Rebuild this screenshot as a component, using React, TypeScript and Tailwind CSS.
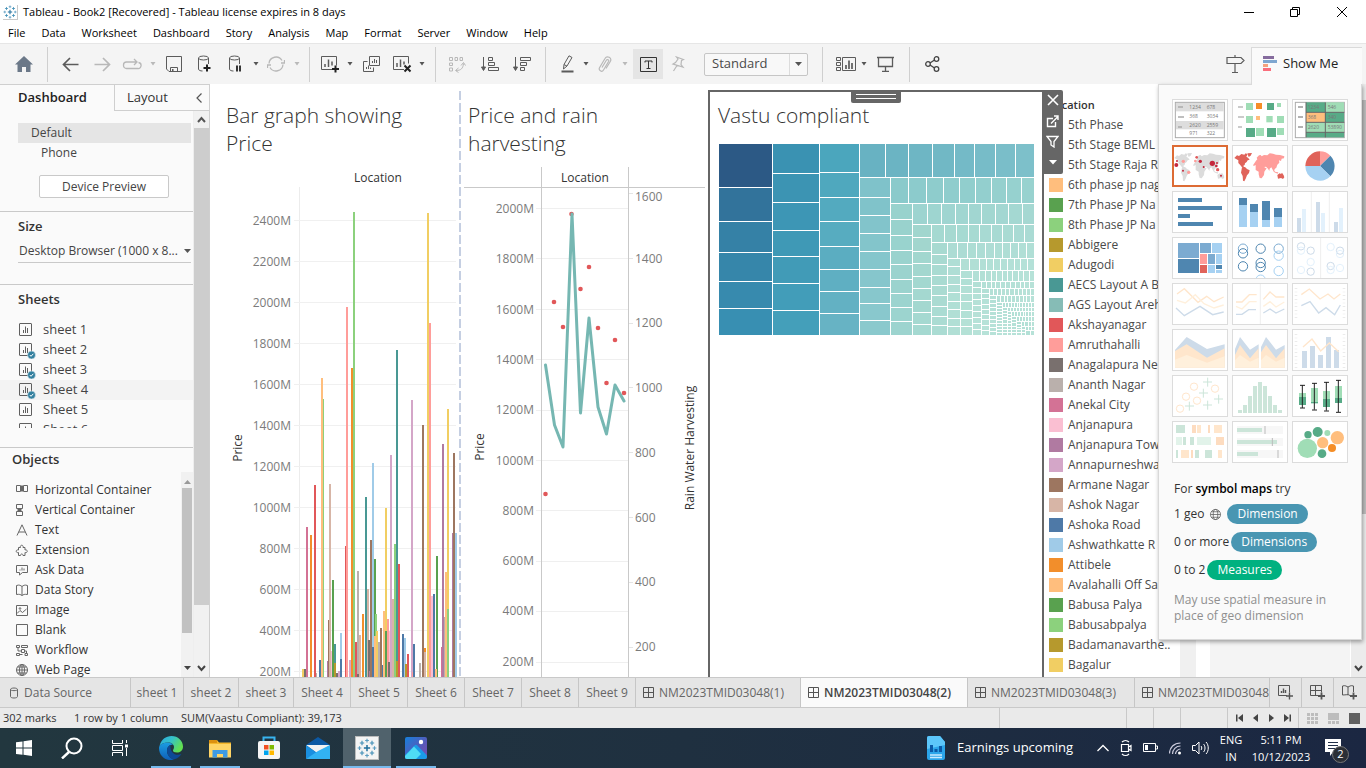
import React from "react";

const UI = "font-['Open_Sans','Noto_Sans',sans-serif]";

/* ---------- shared bits ---------- */

function Svg({ w, h, vb, children, label }: { w: number; h: number; vb?: string; children: React.ReactNode; label?: string }) {
  return (
    <svg width={w} height={h} viewBox={vb ?? `0 0 ${w} ${h}`} fill="none" className="block shrink-0" role={label ? "img" : undefined} aria-label={label} aria-hidden={label ? undefined : true}>
      {children}
    </svg>
  );
}

function Caret({ dim }: { dim?: boolean }) {
  return (
    <Svg w={6} h={4}>
      <path d="M0.5 0h5L3 3.5z" fill={dim ? "#b9b9b9" : "#555"} />
    </Svg>
  );
}

function TableauMark({ s }: { s: number }) {
  const plus = (x: number, y: number, r: number) => `M${x - r} ${y}h${2 * r}M${x} ${y - r}v${2 * r}`;
  return (
    <Svg w={s} h={s} vb="0 0 32 32">
      <path d={plus(16, 16, 5)} stroke="#1f6f9c" strokeWidth="2.4" />
      <path d={[plus(8, 8, 3.5), plus(24, 8, 3.5), plus(8, 24, 3.5), plus(24, 24, 3.5)].join("")} stroke="#3f8db5" strokeWidth="1.8" />
      <path d={[plus(16, 4, 3), plus(16, 28, 3), plus(4, 16, 3), plus(28, 16, 3)].join("")} stroke="#5a9cc0" strokeWidth="1.8" />
    </Svg>
  );
}

/* ---------- title and menu ---------- */

function TitleBar() {
  return (
    <header className="flex h-6 shrink-0 items-center bg-white pl-[3px] text-xs text-black">
      <span className="mr-[5px] border-r border-b border-[#c9c9c9]"><TableauMark s={14} /></span>
      <h1 className="flex-1 text-[11px]">Tableau - Book2 [Recovered] - Tableau license expires in 8 days</h1>
      <div className="flex">
        <button aria-label="Minimize" className="flex w-[46px] items-center justify-center"><Svg w={10} h={10}><path d="M0 5.5h10" stroke="#000" /></Svg></button>
        <button aria-label="Restore" className="flex w-[46px] items-center justify-center">
          <Svg w={10} h={10}><path d="M0.5 2.5h7v7h-7zM2.5 2.5v-2h7v7h-2" stroke="#000" /></Svg>
        </button>
        <button aria-label="Close" className="flex w-[48px] items-center justify-center"><Svg w={10} h={10}><path d="M0 0l10 10M10 0L0 10" stroke="#000" /></Svg></button>
      </div>
    </header>
  );
}

function MenuBar() {
  const items = ["File", "Data", "Worksheet", "Dashboard", "Story", "Analysis", "Map", "Format", "Server", "Window", "Help"];
  return (
    <nav className="flex h-[19px] shrink-0 items-center gap-4 bg-white pl-2 text-[11px] text-black">
      {items.map((m) => <button key={m}>{m}</button>)}
    </nav>
  );
}

/* ---------- toolbar ---------- */

const G = "#5b5b5b";
const D = "#b8b8b8";

function Sep({ className }: { className: string }) {
  return <span className={`h-[35px] w-px bg-[#cfcfcf] ${className}`} />;
}

function Tool({ className, label, children }: { className: string; label: string; children: React.ReactNode }) {
  return <button aria-label={label} className={`flex h-[30px] shrink-0 items-center justify-center ${className}`}>{children}</button>;
}

function Cylinder({ children }: { children: React.ReactNode }) {
  return (
    <Svg w={18} h={20}>
      <ellipse cx="7.5" cy="4" rx="5" ry="2" stroke={G} />
      <path d="M2.5 4v11c0 1.4 2 2 4 2M12.500 4v6" stroke={G} />
      {children}
    </Svg>
  );
}

function Toolbar() {
  return (
    <div className="flex h-[41px] shrink-0 items-center border-t border-[#e6e6e6] bg-[#f4f4f4]">
      <Tool className="w-[47px]" label="Start page">
        <Svg w={18} h={16}><path d="M9 0L0 8.500h2.500V16h4.500v-5h4v5h4.500V8.500H18z" fill="#6b7888" /></Svg>
      </Tool>
      <Sep className="" />
      <Tool className="ml-[6px] w-8" label="Undo"><Svg w={17} h={15}><path d="M16.500 7.500H1.500M8 1L1.500 7.500L8 14" stroke={G} strokeWidth="1.700" /></Svg></Tool>
      <Tool className="w-8" label="Redo"><Svg w={17} h={15}><path d="M0.500 7.500h15M9 1l6.500 6.500L9 14" stroke={D} strokeWidth="1.700" /></Svg></Tool>
      <Tool className="w-7" label="Replay"><Svg w={20} h={13}><path d="M8 10.500H4.500a3 3 0 0 1-3-3v-0.500a3 3 0 0 1 3-3H14M12 1l3 3L12 7M16.500 4.500a3 3 0 0 1-1 6H7" stroke={D} strokeWidth="1.300" /></Svg></Tool>
      <Tool className="w-[14px]" label="Replay options"><Caret dim /></Tool>
      <Tool className="w-7" label="Save"><Svg w={16} h={16}><path d="M0.500 0.500h15v15H3L0.500 13zM4.500 15.500v-4h7v4" stroke={G} /><path d="M6 13h1.500v2H6z" fill={G} /></Svg></Tool>
      <Tool className="w-[34px]" label="New data source"><Cylinder><path d="M11 10.500v7M7.500 14h7" stroke="#222" strokeWidth="2" /></Cylinder></Tool>
      <Tool className="w-7" label="Pause updates"><Cylinder><path d="M10 11.500v6M13 11.500v6" stroke="#222" strokeWidth="1.800" /></Cylinder></Tool>
      <Tool className="w-3" label="Pause options"><Caret /></Tool>
      <Tool className="w-7" label="Refresh"><Svg w={18} h={16}><path d="M2 7.500a7 7 0 0 1 13-3M16 8.500a7 7 0 0 1-13 3M14 7h3.500V4M4 9H0.500v3" stroke={D} strokeWidth="1.300" /></Svg></Tool>
      <Tool className="w-[14px]" label="Refresh options"><Caret dim /></Tool>
      <Sep className="ml-[5px]" />
      <Tool className="ml-[5px] w-[30px]" label="New worksheet"><Svg w={19} h={18}><path d="M12 14.500H0.500V1.500h15v9" stroke={G} /><path d="M4 9v3M7.500 4.500V12M11 6.500v4" stroke={G} strokeWidth="1.500" /><path d="M14.500 10.500v7M11 14h7" stroke="#222" strokeWidth="2" /></Svg></Tool>
      <Tool className="w-[10px]" label="New options"><Caret /></Tool>
      <Tool className="w-[33px]" label="Duplicate"><Svg w={18} h={17}><path d="M6.500 0.500h10v9h-10zM4.500 5.500h-4v10h10v-4" stroke={G} /><path d="M9.500 7V5M11.500 7V3M13.500 7V4M3.500 13v-2M5.500 13V9.500M7.500 13v-1.500" stroke={G} /></Svg></Tool>
      <Tool className="w-7" label="Clear sheet"><Svg w={19} h={18}><path d="M11 14.500H0.500V1.500h15v7" stroke={G} /><path d="M4 8v4M7.500 4.500V12M11 6.500v3" stroke={G} strokeWidth="1.500" /><path d="M11.500 10.500l6 6M17.500 10.500l-6 6" stroke="#222" strokeWidth="2" /></Svg></Tool>
      <Tool className="w-3" label="Clear options"><Caret /></Tool>
      <Sep className="ml-[7px]" />
      <Tool className="ml-[5px] w-8" label="Swap rows and columns"><Svg w={18} h={17}><path d="M1.500 1.500h3v3h-3zM7 1.500h2.500v3H7zM12 1.500h2.500v3H12zM1.500 7h3v2.500h-3zM1.500 12h3v3h-3zM8 14.500c5 0 7-2 7.500-7M13 9.500l2.500-3 2 3M10.500 12l-3 2.500 3 2" stroke={D} /></Svg></Tool>
      <Tool className="w-[34px]" label="Sort ascending"><Svg w={18} h={16}><path d="M2.500 1v13M0.500 11l2 3.500 2-3.500z" stroke={G} fill={G} /><path d="M7.500 1.500h4v3h-4zM7.500 6.500h6v3h-6zM7.500 11.500h10v3h-10z" stroke={G} /></Svg></Tool>
      <Tool className="w-[30px]" label="Sort descending"><Svg w={18} h={16}><path d="M2.500 1v13M0.500 11l2 3.500 2-3.500z" stroke={G} fill={G} /><path d="M7.500 1.500h10v3h-10zM7.500 6.500h6v3h-6zM7.500 11.500h4v3h-4z" stroke={G} /></Svg></Tool>
      <Sep className="ml-2" />
      <Tool className="ml-[7px] w-[30px]" label="Highlight"><Svg w={14} h={18}><path d="M3 9.500L8 0.800l3 1.700-5 8.500-3.500 3zM3 9.500l3 1.700" stroke={G} /><path d="M0.500 16.500h12" stroke={G} strokeWidth="2" /></Svg></Tool>
      <Tool className="w-[6px]" label="Highlight options"><Caret /></Tool>
      <Tool className="w-8" label="Group"><Svg w={14} h={17}><path d="M4 11.500L8.500 4a1.300 1.300 0 0 1 2.200 1.300L5.500 14a2.300 2.300 0 0 1-4-2.300L7 2.500a3 3 0 0 1 5.300 3L8 12.500" stroke={D} strokeWidth="1.200" /></Svg></Tool>
      <Tool className="w-2" label="Group options"><Caret dim /></Tool>
      <Tool className="ml-1 w-[30px] bg-[#e5e5e5]" label="Show mark labels"><Svg w={17} h={15}><path d="M0.500 0.500h16v14h-16z" stroke="#333" /><path d="M5 5.500V4h7v1.500M8.500 4v7.500M6.500 11.500h4" stroke="#333" /></Svg></Tool>
      <Tool className="w-[30px]" label="Fix axes"><Svg w={14} h={16}><path d="M5.500 1l7 2.500-2 1-0.500 4 2 2.500L2 8l2.500-1.500L7 3zM6 9.500L2.500 15" stroke={D} strokeWidth="1.200" /></Svg></Tool>
      <div className="relative ml-[11px] flex h-[23px] w-[104px] shrink-0 items-center rounded-[2px] border border-[#c6c6c6] bg-[#f8f8f8]">
        <select aria-label="Fit" className="h-full w-full appearance-none bg-transparent pl-[7px] text-[13px] text-[#4a4a4a]" defaultValue="Standard"><option>Standard</option></select>
        <span className="pointer-events-none absolute right-0 flex h-full w-[18px] items-center justify-center border-l border-[#dcdcdc]"><Svg w={7} h={4}><path d="M0 0h7L3.500 4z" fill="#555" /></Svg></span>
      </div>
      <Sep className="ml-[14px]" />
      <Tool className="ml-2 w-[30px]" label="Show cards"><Svg w={20} h={15}><path d="M0.500 0.500h4v3h-4zM0.500 5.500h4v3h-4zM0.500 10.500h4v3h-4zM6.500 0.500h13v13h-13z" stroke={G} /><path d="M10 12V8M13 12V3.500M16 12V6" stroke={G} strokeWidth="1.700" /></Svg></Tool>
      <Tool className="w-[6px]" label="Card options"><Caret /></Tool>
      <Tool className="ml-[3px] w-[30px]" label="Presentation mode"><Svg w={17} h={16}><path d="M0 1.500h17M1.500 1.500v9h14v-9M8.500 10.500V15M5 15.500h7" stroke={G} strokeWidth="1.300" /></Svg></Tool>
      <Sep className="ml-[9px]" />
      <Tool className="ml-[7px] w-[30px]" label="Share"><Svg w={15} h={16}><g stroke="#444" strokeWidth="1.300"><circle cx="3" cy="8" r="2.300" /><circle cx="11.500" cy="3" r="2.300" /><circle cx="11.500" cy="13" r="2.300" /><path d="M5 7l4.500-3M5 9l4.500 3" /></g></Svg></Tool>
      <span className="flex-1" />
      <Tool className="w-8" label="Guide"><Svg w={19} h={18}><path d="M1 2.500h14l3 3-3 3H1zM9 0v2.500M9 8.500V17M6 17.500h6" stroke={G} strokeWidth="1.200" /></Svg></Tool>
      <button className="relative z-20 mr-1 flex h-[37px] w-[111px] shrink-0 items-center self-end border-t border-l border-[#dadada] bg-[#fafafa] pb-[5px] pl-[11px] text-[13px] text-[#222]">
        <Svg w={15} h={15}><path d="M0 0h11v3H0z" fill="#866c9e" /><path d="M0 4h14v3H0z" fill="#7fa7d0" /><path d="M0 8h5v3H0z" fill="#f5a27d" /><path d="M0 12h8v3H0z" fill="#fa6e7c" /></Svg>
        <span className="ml-[5px]">Show Me</span>
      </button>
    </div>
  );
}

/* ---------- side pane ---------- */

function SheetIcon({ used }: { used: boolean }) {
  return (
    <Svg w={17} h={17}>
      <rect x="0.500" y="1.500" width="12" height="12" rx="0.500" stroke="#5f5f5f" />
      <path d="M4.500 8v3M6.500 4.500V11M8.500 6v5" stroke="#5f5f5f" />
      {used && <><circle cx="12.500" cy="13" r="4" fill="#33809f" stroke="#fafafa" strokeWidth="0.500" /><path d="M10.800 13l1.200 1.300 2.300-2.500" stroke="#fff" /></>}
    </Svg>
  );
}

const objectIcons: [string, React.ReactNode][] = [
  ["Horizontal Container", <path key="a" d="M0.500 1.500h4v6h-4zM7.500 1.500h4v6h-4zM5.500 1.500v6M6.500 1.500v6" />],
  ["Vertical Container", <path key="b" d="M0.500 0.500h6v4h-6zM0.500 7.500h6v4h-6zM1.500 5.500h4M1.500 6.500h4" />],
  ["Text", <path key="c" d="M1 11.500L6 0.800l5 10.700M2.800 8h6.400" />],
  ["Extension", <path key="d" d="M2.500 11.500V8.500c-3 1-3-3.500 0-2.500V3.500h2c-1-3 3.500-3 2.500 0h2V6c3-1 3 3.500 0 2.500v3h-2c0-2-2.500-2-2.500 0z" />],
  ["Ask Data", <path key="e" d="M0.500 1.500h11v7h-5L3.500 11V8.500h-3zM4 6.500v-1M6 6.500v-3M8 6.500v-2" />],
  ["Data Story", <path key="f" d="M0.500 1.500c3-1 4 0 5.500 1 1.500-1 2.500-2 5.500-1v9c-3-0.500-4 0-5.500 1-1.500-1-2.500-1.500-5.500-1zM6 2.500v9" />],
  ["Image", <g key="g"><path d="M0.500 1.500h11v10h-11zM1 9.500l3-3 2.500 2 4-3.500" /><circle cx="4" cy="4.500" r="0.800" /></g>],
  ["Blank", <path key="h" d="M0.500 0.500h11v11h-11z" />],
  ["Workflow", <path key="i" d="M0.500 1.500h3v2h-3zM5.500 1.500h6v2h-6zM2 4v3h3M5.500 5.500h3v3h-3zM0.500 9.500h3v2h-3zM8.500 7h2v2.500M9 9.500h2.500v2H9zM3.500 10.500h3" />],
  ["Web Page", <g key="j"><circle cx="6" cy="6" r="5.500" /><ellipse cx="6" cy="6" rx="2.500" ry="5.500" /><path d="M0.500 6h11M1.500 3h9M1.500 9h9M6 0.500v11" /></g>],
];

function SidePane() {
  return (
    <aside className="flex w-[210px] shrink-0 flex-col overflow-hidden border-t border-r border-[#cfcfcf] bg-[#fafafa] text-[12px] text-[#444]">
      <div className="flex h-[26px] shrink-0 text-[13px]">
        <button className="w-[114px] pl-[18px] text-left font-semibold text-[#222]">Dashboard</button>
        <div className="flex flex-1 items-center border-b border-l border-[#cfcfcf] pr-[7px] pl-3">
          <button className="flex-1 text-left text-[#333]">Layout</button>
          <button aria-label="Collapse pane"><Svg w={6} h={10}><path d="M5.500 0.500L1 5l4.500 4.500" stroke="#555" strokeWidth="1.200" /></Svg></button>
        </div>
      </div>
      <div className="flex min-h-0 flex-1">
        <div className="flex min-w-0 flex-1 flex-col">
          <section className="h-[101px] shrink-0 border-b border-[#c9c9c9] pt-3 pr-[2px] pl-[18px]">
            <button className="block h-5 w-full bg-[#e5e5e5] pl-[13px] text-left">Default</button>
            <button className="block h-5 w-full pl-[23px] text-left">Phone</button>
            <button className="mt-3 ml-[21px] flex h-[23px] w-[130px] items-center justify-center rounded-[2px] border border-[#c9c9c9] bg-white text-[12px]">Device Preview</button>
          </section>
          <section className="h-[73px] shrink-0 border-b border-[#c9c9c9] pt-[6px] pr-[2px] pl-[18px]">
            <h2 className="text-[13px] leading-4 font-semibold text-[#333]">Size</h2>
            <button className="mt-[6px] flex h-[23px] w-full items-center justify-between border-b border-[#c9c9c9] pl-px text-[12px] whitespace-nowrap">
              <span>Desktop Browser (1000 x 8...</span>
              <Svg w={7} h={4}><path d="M0 0h7L3.500 4z" fill="#555" /></Svg>
            </button>
          </section>
          <section className="h-[163px] shrink-0 overflow-hidden border-b border-[#c9c9c9] pt-[6px] pb-[19px]">
            <h2 className="pl-[18px] text-[13px] leading-4 font-semibold text-[#333]">Sheets</h2>
            <ul className="mt-[13px] h-[108px] overflow-hidden">
              {["sheet 1", "sheet 2", "sheet 3", "Sheet 4", "Sheet 5", "Sheet 6"].map((s, i) => (
                <li key={s} className={i === 3 ? "flex h-5 items-center gap-[7px] bg-[#f3f3f3] pl-[19px]" : "flex h-5 items-center gap-[7px] pl-[19px]"}>
                  <SheetIcon used={i > 0 && i < 4} /><span className="text-[13px]">{s}</span>
                </li>
              ))}
            </ul>
          </section>
          <section className="flex min-h-0 flex-1 flex-col pt-[3px]">
            <h2 className="pl-3 text-[13px] leading-4 font-semibold text-[#333]">Objects</h2>
            <div className="mt-[5px] flex min-h-0 flex-1">
              <ul className="flex-1 overflow-hidden pt-2">
                {objectIcons.map(([name, icon]) => (
                  <li key={name} className="flex h-5 items-center pl-4">
                    <svg width="12" height="12" viewBox="0 0 12 12" fill="none" stroke="#666" className="mr-[7px] shrink-0 overflow-visible" aria-hidden>{icon}</svg>
                    <span className="whitespace-nowrap text-[#333]">{name}</span>
                  </li>
                ))}
              </ul>
              <div className="flex w-3 flex-col items-center bg-[#f1f1f1] py-1">
                <Svg w={7} h={12}><path d="M0 8h7L3.500 4z" fill="#999" /></Svg>
                <span className="min-h-0 w-[10px] flex-1 bg-[#c1c1c1]" />
                <span className="h-8" />
                <Svg w={7} h={8}><path d="M0 1h7L3.500 5z" fill="#444" /></Svg>
              </div>
            </div>
          </section>
        </div>
        <div className="flex w-4 flex-col items-center border-l border-[#eee] bg-[#f1f1f1]">
          <Svg w={15} h={17}><path d="M4 11l3.500-4 3.500 4" stroke="#555" strokeWidth="2" /></Svg>
          <span className="min-h-0 w-[15px] flex-1 bg-[#cdcdcd]" />
          <span className="h-14" />
          <Svg w={15} h={16}><path d="M4 5l3.500 4L11 5" stroke="#444" strokeWidth="2" /></Svg>
        </div>
      </div>
    </aside>
  );
}

/* ---------- charts ---------- */

const T = {
  y: "#f1ce63", k: "#79706e", p: "#d37295", o: "#f28e2b", r: "#e15759", a: "#bab0ac", b: "#4e79a7", lo: "#ffbe7d",
  lg: "#8cd17d", v: "#b07aa1", n: "#9d7660", t: "#d7b5a6", g: "#59a14f", e: "#499894", d: "#b6992d", lv: "#d4a6c8",
  lb: "#a0cbe8", lr: "#ff9d9a", lp: "#fabfd2",
};

const bars: [number, number, string][] = [
  [302, 669, T.y], [304, 669, T.k], [306, 527, T.p], [310, 535, T.o], [315, 673, T.a], [314, 485, T.r], [319, 660, T.b],
  [322, 399, T.lg], [321, 378, T.lo], [327, 661, T.v], [328, 620, T.n], [329, 484, T.t], [331, 651, T.lp], [332, 580, T.g],
  [334, 644, T.e], [334, 663, T.d], [336, 673, T.k], [338, 671, T.lv], [340, 633, T.lb], [340, 659, T.b], [345, 546, T.r],
  [346, 307, T.lr], [349, 660, T.lv], [351, 368, T.o], [353, 212, T.lg], [355, 642, T.r], [357, 571, T.a], [357, 674, T.k],
  [359, 635, T.t], [362, 614, T.o], [365, 497, T.e], [367, 589, T.t], [368, 640, T.k], [369, 671, T.v], [370, 540, T.n],
  [374, 559, T.g], [372, 463, T.lb], [372, 647, T.b], [375, 614, T.lg], [374, 636, T.lo], [376, 631, T.y], [378, 642, T.a],
  [380, 628, T.n], [382, 665, T.b], [383, 611, T.lo], [385, 508, T.y], [385, 631, T.g], [387, 619, T.lr], [389, 631, T.lp],
  [388, 662, T.k], [390, 455, T.lv], [392, 599, T.t], [394, 544, T.lg], [398, 564, T.r], [396, 350, T.e], [396, 661, T.d],
  [402, 634, T.b], [404, 638, T.lb], [405, 664, T.d], [407, 654, T.r], [411, 400, T.lv], [412, 672, T.lr], [413, 644, T.b],
  [419, 663, T.a], [422, 425, T.n], [424, 648, T.o], [424, 652, T.t], [427, 213, T.y], [429, 323, T.lr], [431, 596, T.lp],
  [433, 594, T.b], [436, 556, T.g], [435, 669, T.lo], [441, 647, T.p], [442, 444, T.v], [444, 617, T.a], [445, 572, T.lo],
  [447, 409, T.y], [447, 609, T.lg], [455, 533, T.lb], [452, 533, T.v], [453, 453, T.n],
];

const axisText = { fontSize: 12, fill: "#7b7b7b" };
const headText = { fontSize: 12, fill: "#333", fontWeight: 500 };

function BarChart() {
  return (
    <svg width="249" height="520" viewBox="210 157 249 520" className="block shrink-0" role="img" aria-label="Price by location">
      <text x="378" y="182" textAnchor="middle" {...headText}>Location</text>
      <path d="M299.500 187V677" stroke="#ececec" />
      {Array.from({ length: 12 }, (_, i) => (
        <g key={i}>
          <path d={`M294 ${220.5 + 41 * i}H456`} stroke="#f0f0f0" />
          <text x="291" y={225 + 41 * i} textAnchor="end" {...axisText}>{2400 - 200 * i}M</text>
        </g>
      ))}
      <text transform="translate(242 448) rotate(-90)" textAnchor="middle" {...headText}>Price</text>
      {bars.map(([x, y, c], i) => <rect key={i} x={x} y={y} width={2} height={677 - y} fill={c} />)}
    </svg>
  );
}

const dots = [[545.5, 494], [554, 302], [563, 327], [571.5, 214], [580.5, 289], [589, 267], [598, 328], [606.5, 383], [615, 340], [624, 393]];

function LineChart() {
  return (
    <svg width="248" height="520" viewBox="461 157 248 520" className="block shrink-0" role="img" aria-label="Price and rain water harvesting by location">
      <text x="585" y="182" textAnchor="middle" {...headText}>Location</text>
      {Array.from({ length: 10 }, (_, i) => (
        <g key={i}>
          <path d={`M536 ${Math.round(208 + 50.4 * i) + 0.5}H628`} stroke="#efefef" />
          <text x="534" y={Math.round(213 + 50.3 * i)} textAnchor="end" {...axisText}>{2000 - 200 * i}M</text>
        </g>
      ))}
      {Array.from({ length: 8 }, (_, i) => (
        <g key={i}>
          <path d={`M629 ${Math.round(193 + 64.8 * i) + 0.5}h4`} stroke="#e4e4e4" />
          <text x="635" y={i === 0 ? 201 : Math.round(198 + 64.7 * i)} {...axisText}>{1600 - 200 * i}</text>
        </g>
      ))}
      <path d="M464 187.500H705M541.500 167V677M628.500 167V677" stroke="#c9c9c9" />
      {dots.map(([x, y], i) => <circle key={i} cx={x} cy={y} r="2.300" fill="#e15759" />)}
      <path d="M545.500 365L554.500 425L563 447L572 214L580.500 413L589 318L598 407L606.500 434L615 385L624 401" fill="none" stroke="#76b7b2" strokeWidth="3" strokeLinecap="round" strokeLinejoin="round" />
      <text transform="translate(484 447) rotate(-90)" textAnchor="middle" {...headText}>Price</text>
      <text transform="translate(694 448) rotate(-90)" textAnchor="middle" {...headText}>Rain Water Harvesting</text>
    </svg>
  );
}

/* A strip is a run of neighbouring tiles: "v" stacks downwards, "h" runs to the right. */
type Strip = { dir: "v" | "h"; from: number; to: number; cuts: number[]; c0: string; c1: string };

const even = (a: number, b: number, step: number) => {
  const n = Math.max(1, Math.round((b - a) / step));
  return Array.from({ length: n + 1 }, (_, i) => a + ((b - a) * i) / n);
};

const strips: Strip[] = [
  { dir: "v", from: 0, to: 54, cuts: [0, 44], c0: "#2c5985", c1: "#2c5985" },
  { dir: "v", from: 0, to: 54, cuts: [44, 78], c0: "#32739b", c1: "#32739b" },
  { dir: "v", from: 0, to: 54, cuts: [78, 109, 138, 165, 192], c0: "#3581a6", c1: "#388fb2" },
  { dir: "v", from: 54, to: 101, cuts: [0, 30, 59, 87, 113, 140, 167, 192], c0: "#3a92b2", c1: "#449fba" },
  { dir: "v", from: 101, to: 141, cuts: [0, 29, 54, 78, 103, 126, 148, 170, 192], c0: "#4ba6bd", c1: "#67b3c4" },
  { dir: "h", from: 0, to: 34, cuts: [141, 167, 190, 214, 236, 256, 277, 297, 316], c0: "#68b2c2", c1: "#7dc0ca" },
  { dir: "v", from: 141, to: 172, cuts: [34, 54, 72, 90, 108, 126, 144, 160, 177, 192], c0: "#7fc2ca", c1: "#8ac9cd" },
  { dir: "h", from: 34, to: 60, cuts: [172, 190, 208, 225, 241, 257, 273, 288, 303, 316], c0: "#8acacb", c1: "#98d2cf" },
  { dir: "v", from: 172, to: 194, cuts: [60, 76, 92, 107, 121, 136, 150, 164, 178, 192], c0: "#98d2cd", c1: "#9dd4cf" },
  { dir: "h", from: 60, to: 81, cuts: [194, 209, 223, 237, 250, 263, 277, 290, 304, 316], c0: "#9dd4d0", c1: "#a5d8d2" },
  { dir: "v", from: 194, to: 213, cuts: [81, 94, 108, 120, 133, 145, 157, 169, 181, 192], c0: "#a1d6ce", c1: "#a5d9d1" },
  { dir: "h", from: 81, to: 99, cuts: [213, 226, 238, 250, 261, 273, 284, 295, 306, 316], c0: "#a5d9d1", c1: "#aadbd4" },
  { dir: "v", from: 213, to: 229, cuts: [99, 111, 121, 132, 142, 152, 163, 173, 182, 192], c0: "#a8dad1", c1: "#abdcd3" },
  { dir: "h", from: 99, to: 115, cuts: [229, 239, 249, 258, 267, 276, 284, 292, 300, 308, 316], c0: "#acdcd4", c1: "#b0dfd6" },
  { dir: "v", from: 229, to: 242, cuts: [115, 123, 132, 141, 149, 158, 166, 175, 183, 192], c0: "#afded5", c1: "#b1dfd5" },
  { dir: "h", from: 115, to: 127, cuts: [242, 251, 261, 268, 275, 282, 289, 296, 302, 309, 316], c0: "#b1dfd5", c1: "#b4e1d8" },
  { dir: "v", from: 242, to: 254, cuts: [127, 135, 142, 150, 158, 167, 175, 183, 192], c0: "#b1e0d6", c1: "#b4e1d6" },
  { dir: "h", from: 127, to: 138, cuts: [254, 261, 267, 273, 278, 284, 289, 294, 300, 305, 311, 316], c0: "#b2e0d6", c1: "#b6e2d8" },
  ...([
    ["v", 254, 263, 138, 192, 6], ["h", 138, 145, 263, 316, 5], ["v", 263, 271, 145, 192, 5], ["h", 145, 152, 271, 316, 4],
    ["v", 271, 278, 152, 192, 4], ["h", 152, 159, 278, 316, 4], ["v", 278, 284, 159, 192, 3], ["h", 159, 164, 284, 316, 3],
    ["v", 284, 289, 164, 192, 3], ["h", 164, 168, 289, 316, 3], ["v", 289, 293, 168, 192, 3], ["h", 168, 173, 293, 316, 3],
    ["v", 293, 298, 173, 192, 3], ["h", 173, 178, 298, 316, 3], ["v", 298, 303, 178, 192, 3], ["h", 178, 183, 303, 316, 3],
    ["v", 303, 307, 183, 192, 3], ["h", 183, 187, 307, 316, 3], ["h", 187, 192, 307, 316, 4],
  ] as ["v" | "h", number, number, number, number, number][]).map(([dir, from, to, a, b, s]) => ({ dir, from, to, cuts: even(a, b, s), c0: "#b3e0d6", c1: "#b7e2d8" })),
];

const mix = (a: string, b: string, t: number) =>
  "#" + [1, 3, 5].map((i) => {
    const p = parseInt(a.slice(i, i + 2), 16), q = parseInt(b.slice(i, i + 2), 16);
    return Math.round(p + (q - p) * t).toString(16).padStart(2, "0");
  }).join("");

function Treemap() {
  return (
    <svg width="315" height="191" viewBox="0 0 315 191" className="block shrink-0" role="img" aria-label="Vastu compliant treemap">
      {strips.flatMap((s, k) => s.cuts.slice(0, -1).map((c, i) => {
        const a = Math.round(c), size = Math.round(s.cuts[i + 1]) - a - 1;
        const fill = mix(s.c0, s.c1, i / Math.max(1, s.cuts.length - 2));
        const thick = s.to - s.from - 1;
        return s.dir === "v"
          ? <rect key={`${k}-${i}`} x={s.from} y={a} width={thick} height={size} fill={fill} />
          : <rect key={`${k}-${i}`} x={a} y={s.from} width={size} height={thick} fill={fill} />;
      }))}
    </svg>
  );
}

const legend: [string, string][] = [
  ["5th Phase", T.lb], ["5th Stage BEML", T.b], ["5th Stage Raja R", T.o], ["6th phase jp nag", T.lo], ["7th Phase JP Na", T.g], ["8th Phase JP Na", T.lg],
  ["Abbigere", T.d], ["Adugodi", T.y], ["AECS Layout A B", T.e], ["AGS Layout Areh", "#86bcb6"], ["Akshayanagar", T.r], ["Amruthahalli", T.lr],
  ["Anagalapura Ne", T.k], ["Ananth Nagar", T.a], ["Anekal City", T.p], ["Anjanapura", T.lp], ["Anjanapura Tow", T.v], ["Annapurneshwa", T.lv],
  ["Armane Nagar", T.n], ["Ashok Nagar", T.t], ["Ashoka Road", T.b], ["Ashwathkatte R", T.lb], ["Attibele", T.o], ["Avalahalli Off Sa", T.lo],
  ["Babusa Palya", T.g], ["Babusabpalya", T.lg], ["Badamanavarthe..", T.d], ["Bagalur", T.y],
];

function Dash() {
  return <span className="mt-[7px] w-[2px] shrink-0 bg-[repeating-linear-gradient(to_bottom,#c5cfe2_0_9px,transparent_9px_12px)]" />;
}

function Canvas() {
  const title = "pt-[17px] text-[21px] leading-7 font-light text-[#333]";
  return (
    <main className="flex min-w-0 flex-1 overflow-hidden bg-white">
      <section className="w-[249px] shrink-0 overflow-hidden">
        <h2 className={`pr-6 pl-4 ${title}`}>Bar graph showing Price</h2>
        <BarChart />
      </section>
      <Dash />
      <section className="w-[247px] shrink-0 overflow-hidden">
        <h2 className={`pr-20 pl-[7px] ${title}`}>Price and rain harvesting</h2>
        <LineChart />
      </section>
      <section className="relative mt-[6px] w-[336px] shrink-0 border-x-2 border-t-2 border-[#666]">
        <h2 className="px-2 pt-[9px] text-[21px] leading-7 font-light text-[#333]">Vastu compliant</h2>
        <div className="pt-[15px] pl-[9px]"><Treemap /></div>
        <button aria-label="Move sheet" className="absolute -top-[2px] left-[141px] flex h-[13px] w-[50px] flex-col items-center justify-center gap-[3px] rounded-b-[2px] bg-[#666]">
          <span className="h-px w-10 bg-white" /><span className="h-px w-10 bg-white" />
        </button>
        <div className="absolute -top-[2px] left-[332px] z-10 flex h-[84px] w-[21px] flex-col items-center rounded-r-[2px] bg-[#666] pb-px">
          <button aria-label="Remove" className="flex flex-1 items-center"><Svg w={12} h={12}><path d="M1 1l10 10M11 1L1 11" stroke="#fff" strokeWidth="1.600" /></Svg></button>
          <button aria-label="Go to sheet" className="flex flex-1 items-center"><Svg w={13} h={13}><path d="M7 3.500H1.500v8h8V7M5 8.500L11.500 2M8 1h4v4" stroke="#fff" strokeWidth="1.400" /></Svg></button>
          <button aria-label="Use as filter" className="flex flex-1 items-center"><Svg w={13} h={13}><path d="M1 1.500h11L8 6.500V12L5 10V6.500z" stroke="#fff" strokeWidth="1.300" /></Svg></button>
          <button aria-label="More options" className="flex flex-1 items-center"><Svg w={8} h={5}><path d="M0 0h8L4 4.500z" fill="#fff" /></Svg></button>
        </div>
      </section>
      <section className="w-[136px] shrink-0 overflow-hidden pt-[11px] pl-[5px] text-[12px] text-[#4a4a4a]">
        <h3 className="h-5 text-[11px] leading-5 font-semibold text-[#333]">Location</h3>
        <ul>
          {legend.map(([name, color]) => (
            <li key={name} className="flex h-5 items-center gap-[5px] whitespace-nowrap">
              <span className="h-[14px] w-[14px] shrink-0" style={{ backgroundColor: color }} />{name}
            </li>
          ))}
        </ul>
      </section>
      <div className="w-4 shrink-0 bg-[#f0f0f0]" />
      <div className="w-[14px] shrink-0" />
      <div className="min-w-0 flex-1 bg-[#f4f4f4]" />
      <div className="flex w-4 shrink-0 flex-col items-center border-l border-white bg-[#ececec] pt-4">
        <span className="h-[414px] w-full bg-[#bdbdbd]" />
        <span className="flex-1" />
        <Svg w={15} h={16}><path d="M4 5l3.500 4L11 5" stroke="#444" strokeWidth="2" /></Svg>
      </div>
    </main>
  );
}

/* ---------- show me ---------- */

function World({ fill, alt }: { fill: string; alt: string }) {
  return (
    <>
      <g fill={fill}>
        <path d="M7 39l8-8 6 2 7-6 9 2 4-4 6 3-4 7 5 3 5 6-6 2-3 5-5 4-1 5-4 2 2 5 5 4-3 1-8-5-6-8-5-5 0-8z" />
        <path d="M46 25l14-1-4 8-6 4z" />
        <path d="M30 67l9-1 6 6 8 4-2 8-6 7-4 10-4 8-4-2-1-14-5-10z" />
      </g>
      <g fill={alt}>
        <path d="M72 47l4-4-2-5 7-7 5-1 3 4 7-4 10 1 7-6 10 1 9 3 12 1 13 4-1 6-7 1-2 7-6-2 1 7-6 6-3 9-5 4-2 9-4-7-4-7-5 4-1 7-4-7-6-6-6 1-5-2 3 7-4 2-6-9-9-1-5-3-4 3-3-2z" />
        <path d="M71 59l8-4 12 3 8 10 5 2-7 10-1 10-7 10-6-1-3-11 0-8-9-5z" />
        <path d="M124 76l7 5 8 1-2 4-10-4z" />
      </g>
      <path d="M136 90l7-5 4 2 3-4 5 8 2 6-4 5-6-3-9 2z" fill={fill} />
    </>
  );
}

const R = (x: number, y: number, w: number, h: number, f: string) => <rect key={`${x}-${y}-${f}`} x={x} y={y} width={w} height={h} fill={f} />;
const O = (x: number, y: number, s: string, r = 14) => <circle key={`${x}-${y}`} cx={x} cy={y} r={r} stroke={s} strokeWidth="3" />;
const C = (x: number, y: number, r: number, f: string) => <circle key={`${x}-${y}`} cx={x} cy={y} r={r} fill={f} />;
const P = (d: string, s: string, w = 4) => <path d={d} stroke={s} strokeWidth={w} />;
const num = { fontSize: 15, fill: "#777" };

const A = "#4f86b0", B = "#a6d1f2", M = "#7cabd1", GR = "#57ab87", LG = "#a0ddb6", OR = "#f58e27", LO = "#ffbe7d";
const fB = "#cddbe9", fO = "#ffe6cc", fY = "#fff0dc", fG = "#cce5d9", ffB = "#e3f1fc";

const thumbs: [string, React.ReactNode][] = [
  ["text table", <><rect x="10" y="10" width="147" height="106" stroke="#aaa" strokeWidth="3" />{R(12, 12, 143, 25, "#ddd")}{R(12, 66, 143, 25, "#ddd")}<path d="M18 24h15M18 54h18M18 84h12" stroke="#aaa" strokeWidth="4" /><text x="52" y="30" {...num}>1234</text><text x="104" y="30" {...num}>678</text><text x="52" y="58" {...num}>368</text><text x="104" y="58" {...num}>3034</text><text x="52" y="85" {...num}>2620</text><text x="104" y="85" {...num}>2559</text><text x="52" y="109" {...num}>971</text><text x="104" y="109" {...num}>322</text></>],
  ["heat map", <><path d="M18 24h15M18 54h18M18 84h12" stroke="#bbb" strokeWidth="4" />{R(42, 12, 21, 21, LG)}{R(72, 12, 18, 18, OR)}{R(105, 12, 21, 21, GR)}{R(135, 12, 12, 12, LG)}{R(42, 51, 21, 21, LG)}{R(72, 51, 12, 12, LO)}{R(103, 51, 19, 19, LG)}{R(135, 51, 21, 21, LG)}{R(42, 87, 27, 27, GR)}{R(72, 87, 24, 24, LG)}{R(105, 87, 27, 27, GR)}{R(135, 87, 21, 21, LG)}</>],
  ["highlight table", <><rect x="10" y="10" width="147" height="106" stroke="#aaa" strokeWidth="3" />{R(42, 10, 57, 30, GR)}{R(99, 10, 57, 30, LG)}{R(42, 40, 57, 30, LO)}{R(99, 40, 57, 30, GR)}{R(42, 70, 57, 30, LG)}{R(99, 70, 57, 30, LG)}{R(42, 100, 57, 15, GR)}{R(99, 100, 57, 15, GR)}<path d="M42 10v105M100 10v105M42 40h115M42 70h115M42 100h115" stroke="#666" strokeWidth="3" /><path d="M18 24h15M18 54h15M18 84h15" stroke="#999" strokeWidth="4" /><text x="47" y="30" {...num}>1234</text><text x="107" y="30" {...num}>546</text><text x="47" y="60" {...num}>368</text><text x="107" y="60" {...num}>340</text><text x="47" y="90" {...num}>2620</text><text x="107" y="90" {...num}>53890</text></>],
  ["symbol map", <><World fill="#dcdcdc" alt="#dcdcdc" />{[[13, 60, 6], [121, 55, 8], [133, 63, 4], [85, 49, 5], [33, 77, 3], [15, 48, 3], [95, 66, 3], [135, 54, 3], [147, 92, 3]].map(([x, y, r]) => C(x, y, r, "#c5283d"))}{[[74, 37, 4], [137, 74, 5]].map(([x, y, r]) => C(x, y, r, "#e15759"))}{[[34, 49, 5], [50, 82, 5], [70, 48, 4]].map(([x, y, r]) => C(x, y, r, "#ff9d9a"))}</>],
  ["filled map", <World fill="#e0635a" alt="#ff9d9a" />],
  ["pie chart", <><path d="M84 63V19a44 44 0 0 1 31 13z" fill="#ff9d9a" /><path d="M84 63L115 32a44 44 0 0 1 0 62z" fill={A} /><path d="M84 63l31 31a44 44 0 0 1-75-31z" fill={B} /><path d="M84 63H40a44 44 0 0 1 44-44z" fill="#e0635a" /></>],
  ["horizontal bars", <>{R(18, 21, 72, 12, A)}{R(18, 45, 132, 12, A)}{R(18, 69, 36, 12, A)}{R(18, 93, 105, 12, A)}</>],
  ["stacked bars", <>{R(21, 21, 24, 21, A)}{R(21, 42, 24, 66, B)}{R(54, 39, 24, 24, A)}{R(54, 63, 24, 45, B)}{R(90, 30, 24, 57, A)}{R(90, 87, 24, 21, B)}{R(126, 51, 24, 27, A)}{R(126, 78, 24, 30, B)}</>],
  ["side-by-side bars", <>{R(15, 81, 12, 42, fB)}{R(30, 54, 12, 69, ffB)}{R(72, 33, 12, 90, fB)}{R(87, 66, 12, 57, ffB)}{R(126, 93, 12, 30, fB)}{R(141, 51, 12, 72, ffB)}<path d="M58 3v120M112 3v120" stroke="#eee" strokeWidth="3" /></>],
  ["treemap", <>{R(18, 18, 63, 45, M)}{R(18, 66, 63, 42, A)}{R(84, 18, 33, 30, M)}{R(120, 18, 30, 30, B)}{R(84, 51, 21, 30, "#ff9d9a")}{R(84, 84, 21, 24, "#e0635a")}{R(108, 51, 21, 30, M)}{R(132, 51, 18, 30, B)}{R(108, 84, 21, 24, B)}{R(132, 84, 18, 12, A)}{R(132, 99, 18, 9, B)}</>],
  ["circle views", <>{O(33, 35, M)}{O(33, 49, A)}{O(33, 88, A)}{O(86, 35, A)}{O(86, 78, A)}{O(86, 90, A)}{O(86, 128, B)}{O(140, 35, M)}{O(140, 56, B)}{O(140, 102, B)}</>],
  ["side-by-side circles", <>{O(27, 28, fB, 11)}{O(27, 41, ffB, 11)}{O(56, 41, fB, 11)}{O(56, 75, ffB, 11)}{O(27, 99, ffB, 11)}{O(56, 104, fB, 11)}{O(116, 30, ffB, 11)}{O(144, 41, fB, 11)}{O(144, 51, ffB, 11)}{O(116, 87, fB, 11)}{O(116, 99, ffB, 11)}{O(144, 93, ffB, 11)}<path d="M86 3v120" stroke="#eee" strokeWidth="3" /></>],
  ["continuous lines", <>{P("M15 33L37 17L78 58L104 40L126 56L155 42", fO)}{P("M15 52L40 60L70 35L96 62L126 75L155 66", fY)}{P("M12 75L37 98L84 70L122 95L155 87", fB)}</>],
  ["discrete lines", <>{P("M12 57h18L52 35h22M94 49l20-22 18 15h25", fO)}{P("M12 70l18 8 22-22h22M94 70l20-14 18 16 25-15", fY)}{P("M12 94h18L50 80h22M94 90l20-12 18 12 25-12", fB)}<path d="M85 3v120" stroke="#eee" strokeWidth="3" /></>],
  ["dual lines", <>{P("M28 35L52 18L84 48L108 33L126 48L145 33", fO)}{P("M28 68L54 56L80 90L102 74L128 95L145 66", fB)}<path d="M12 15v95M156 15v95" stroke="#e5e5e5" strokeWidth="8" strokeDasharray="2 9" /></>],
  ["area charts", <><path d="M9 63L44 24L105 60L158 46V116H9z" fill={fB} /><path d="M9 66L44 46L105 86L158 58V116H9z" fill={fO} /><path d="M9 92L44 78L105 101L158 82V116H9z" fill={fY} /></>],
  ["discrete area charts", <><path d="M9 60L24 24L54 62L80 46V116H9zM87 54L102 24L132 62L158 48V116H87z" fill={fB} /><path d="M9 78L24 48L54 88L80 58V116H9zM87 70L102 48L132 88L158 58V116H87z" fill={fO} /><path d="M9 94L24 78L54 98L80 86V116H9zM87 94L102 78L132 98L158 86V116H87z" fill={fY} /></>],
  ["dual combination", <>{R(30, 66, 15, 51, fB)}{R(54, 51, 15, 66, fB)}{R(78, 78, 15, 39, fB)}{R(102, 24, 15, 93, fB)}{R(126, 63, 15, 54, fB)}{P("M33 54L60 30L86 66L112 42L140 68", fO)}<path d="M12 15v105M156 15v105" stroke="#e5e5e5" strokeWidth="8" strokeDasharray="2 9" /></>],
  ["scatter plots", <>{O(66, 35, fO, 11)}{O(129, 41, fO, 11)}{O(42, 65, fO, 11)}{O(75, 77, fO, 11)}{O(24, 101, fO, 11)}<path d="M93 21h27M107 8v27M81 54h27M94 41v27M126 72h27M140 59v27M93 90h27M107 77v27M39 93h27M52 80v27" stroke={fG} strokeWidth="3" /></>],
  ["histogram", <>{[[18, 105], [33, 90], [48, 63], [63, 33], [78, 21], [93, 33], [108, 63], [123, 90], [138, 105]].map(([x, y]) => R(x, y, 12, 114 - y, fG))}</>],
  ["box plots", <>{[[21, 54, 66, 90], [57, 39, 81, 81], [93, 48, 72, 96], [129, 33, 69, 84]].map(([x, a, b, c]) => <g key={x}>{R(x, a, 21, b - a, LG)}{R(x, b, 21, Math.max(c - b, 4), GR)}</g>)}<path d="M31 30v69M24 31h15M24 99h15M67 24v80M60 25h15M60 105h15M103 21v86M96 22h15M96 108h15M139 15v96M132 16h15M132 112h15" stroke="#222" strokeWidth="3" /></>],
  ["gantt", <>{R(12, 12, 27, 24, fG)}{R(60, 12, 12, 24, "#fddcc0")}{R(75, 12, 12, 24, fO)}{R(108, 12, 6, 24, "#fddcc0")}{R(126, 12, 24, 24, fO)}{R(12, 48, 18, 24, "#e2f3ea")}{R(33, 48, 9, 24, fG)}{R(54, 48, 12, 24, fG)}{R(75, 48, 42, 24, "#e2f3ea")}{R(132, 48, 24, 24, "#fddcc0")}{R(12, 87, 6, 24, fG)}{R(27, 87, 24, 24, fO)}{R(57, 87, 6, 24, "#fddcc0")}{R(69, 87, 12, 24, fG)}{R(99, 87, 21, 24, fG)}{R(138, 87, 12, 24, fO)}</>],
  ["bullet graphs", <>{R(15, 15, 138, 24, "#f7f7f7")}{R(15, 21, 75, 12, fG)}{R(15, 51, 138, 24, "#f7f7f7")}{R(15, 57, 120, 12, fG)}{R(15, 87, 138, 24, "#f7f7f7")}{R(15, 93, 63, 12, fG)}<path d="M99 15v24M121 51v24M138 87v24" stroke="#bbb" strokeWidth="3" /></>],
  ["packed bubbles", <>{C(46, 82, 29, LG)}{C(48, 41, 11, GR)}{C(77, 33, 15, GR)}{C(106, 36, 9, LG)}{C(92, 65, 17, LO)}{C(136, 50, 20, LO)}{C(120, 81, 12, OR)}{C(90, 98, 13, GR)}</>],
];

function ShowMe() {
  const pill = "flex h-5 items-center rounded-full px-[10px] text-[12px] text-white";
  return (
    <section aria-label="Show Me" className="absolute top-0 right-1 z-10 w-[204px] border border-t-0 border-[#d9d9d9] bg-[#fafafa] px-[13px] pt-[15px] pb-[15px] text-[12px] text-[#333] shadow-[1px_2px_4px_rgba(0,0,0,0.35)]">
      <div className="absolute top-0 left-0 h-px w-[93px] bg-[#dadada]" />
      <div className="grid w-[176px] grid-cols-3 gap-1">
        {thumbs.map(([name, art], i) => (
          <button key={name} aria-label={name} className={i === 3 ? "h-[42px] overflow-hidden border-2 border-[#dd6b34] bg-white" : "h-[42px] overflow-hidden border border-[#dcdcdc] bg-white"}>
            <svg viewBox={i === 3 ? "6 6 156 114" : "3 3 162 120"} fill="none" className="block h-full w-full" aria-hidden>{art}</svg>
          </button>
        ))}
      </div>
      <div className="pl-[2px]">
        <p className="mt-[17px] leading-[18px]">For <strong className="font-semibold text-black">symbol maps</strong> try</p>
        <div className="mt-[6px] flex items-center">1 geo
          <svg width="11" height="11" viewBox="0 0 12 12" fill="none" stroke="#555" strokeWidth="0.800" className="mr-[6px] ml-[6px] overflow-visible" aria-hidden><circle cx="6" cy="6" r="5.500" /><ellipse cx="6" cy="6" rx="2.500" ry="5.500" /><path d="M0.500 6h11M1.500 3h9M1.500 9h9" /></svg>
          <span className={`bg-[#4996b2] ${pill}`}>Dimension</span>
        </div>
        <div className="mt-2 flex items-center gap-[2px]">0 or more<span className={`bg-[#4996b2] ${pill}`}>Dimensions</span></div>
        <div className="mt-2 flex items-center gap-[2px]">0 to 2<span className={`bg-[#00b180] ${pill}`}>Measures</span></div>
        <p className="mt-3 text-[12px] leading-4 text-[#8f8f8f]">May use spatial measure in place of geo dimension</p>
      </div>
    </section>
  );
}

/* ---------- sheet tabs and status ---------- */

function GridIcon() {
  return <Svg w={12} h={12}><path d="M0.500 0.500h10v10h-10zM5.500 0.500v10M0.500 5.500h10" stroke="#555" /></Svg>;
}

const tabs: [string, string][] = [
  ["sheet 1", "w-[53px]"], ["sheet 2", "w-[55px]"], ["sheet 3", "w-[55px]"], ["Sheet 4", "w-[57px]"], ["Sheet 5", "w-[57px]"],
  ["Sheet 6", "w-[57px]"], ["Sheet 7", "w-[57px]"], ["Sheet 8", "w-[57px]"], ["Sheet 9", "w-[57px]"],
];

function SheetTabs() {
  const tab = "shrink-0 border-r border-[#c6c6c6] flex items-center";
  return (
    <nav className="flex h-[31px] shrink-0 border-y border-[#c9c9c9] bg-[#e5e5e5] text-[12px] text-[#666]">
      <button className={`${tab} w-[131px] gap-[5px] pl-[9px]`}>
        <Svg w={10} h={12}><path d="M1.500 2.500v7c0 2 7 2 7 0v-7c0-2-7-2-7 0c0 1.500 7 1.500 7 0" stroke="#666" /></Svg>Data Source
      </button>
      {tabs.map(([t, w]) => <button key={t} className={`${tab} ${w} justify-center`}>{t}</button>)}
      <button className={`${tab} w-[165px] gap-1 pl-[7px]`}><GridIcon />NM2023TMID03048(1)</button>
      <button className={`${tab} w-[167px] gap-1 bg-[#fafafa] pl-[7px] font-semibold text-[#444]`}><GridIcon />NM2023TMID03048(2)</button>
      <button className={`${tab} w-[167px] gap-1 pl-[7px]`}><GridIcon />NM2023TMID03048(3)</button>
      <button className="flex min-w-0 flex-1 items-center gap-1 overflow-hidden border-r border-[#c6c6c6] pl-[7px]"><GridIcon />NM2023TMID03048</button>
      <button aria-label="New worksheet" className={`${tab} w-8 justify-center`}><Svg w={16} h={15}><path d="M9 10.500H0.500v-10h11v7" stroke="#555" /><path d="M3.500 8V6M5.500 8V3.500M7.500 8V5M11.500 7.500v7M8 11h7" stroke="#555" strokeWidth="1.400" /></Svg></button>
      <button aria-label="New dashboard" className={`${tab} w-8 justify-center`}><Svg w={16} h={15}><path d="M8 10.500H0.500v-10h11v7M5.500 0.500v10M0.500 5.500h11" stroke="#555" /><path d="M11.500 7.500v7M8 11h7" stroke="#555" strokeWidth="1.800" /></Svg></button>
      <button aria-label="New story" className="flex w-8 shrink-0 items-center justify-center"><Svg w={16} h={15}><path d="M8 10.500C6 9 4 10 0.500 10V1c3-1 4 0.500 5.500 1 1.500-0.500 2.500-2 5.500-1v6M6 2v8" stroke="#555" /><path d="M11.500 7.500v7M8 11h7" stroke="#555" strokeWidth="1.800" /></Svg></button>
    </nav>
  );
}

function StatusBar() {
  const cell = "h-full shrink-0 border-l border-[#c9c9c9]";
  return (
    <div className="flex h-5 shrink-0 items-center bg-[#eaeaea] text-[11px] text-[#333]">
      <span className="w-[71px] pl-[3px]">302 marks</span>
      <span className="w-[106px] pl-[3px]">1 row by 1 column</span>
      <span className="flex-1 pl-1">SUM(Vaastu Compliant): 39,173</span>
      <span className={`w-[127px] ${cell}`} /><span className={`w-[27px] ${cell}`} /><span className={`w-[27px] ${cell}`} /><span className={`w-[47px] ${cell}`} />
      <div className={`flex w-[71px] items-center justify-between pr-[7px] pl-2 ${cell}`}>
        <button aria-label="First"><Svg w={7} h={8}><path d="M0 0.500h1.500v7H0zM7 0v8L2 4z" fill="#444" /></Svg></button>
        <button aria-label="Previous"><Svg w={5} h={8}><path d="M5 0v8L0 4z" fill="#444" /></Svg></button>
        <button aria-label="Next"><Svg w={5} h={8}><path d="M0 0v8l5-4z" fill="#444" /></Svg></button>
        <button aria-label="Last"><Svg w={7} h={8}><path d="M5.500 0.500H7v7H5.500zM0 0v8l5-4z" fill="#444" /></Svg></button>
      </div>
      <div className={`flex w-[68px] items-center justify-between pr-[6px] pl-2 ${cell}`}>
        <button aria-label="Sheet sorter"><Svg w={11} h={11}><path d="M0 0h3v3H0zM4 0h3v3H4zM8 0h3v3H8zM0 4h3v3H0zM4 4h3v3H4zM8 4h3v3H8zM0 8h3v3H0zM4 8h3v3H4zM8 8h3v3H8z" fill="#bdbdbd" /></Svg></button>
        <button aria-label="Filmstrip"><Svg w={11} h={11}><path d="M0 0h11v7H0zM0 8h3v3H0zM4 8h3v3H4zM8 8h3v3H8z" fill="#bdbdbd" /></Svg></button>
        <button aria-label="Tabs"><Svg w={11} h={11}><path d="M0 0h11v11H0z" fill="#606060" /></Svg></button>
      </div>
    </div>
  );
}

/* ---------- taskbar ---------- */

function Taskbar() {
  const app = "relative flex h-full w-12 shrink-0 items-center justify-center";
  const line = "absolute bottom-0 h-[2px] bg-[#76b9ed]";
  return (
    <footer className="flex h-10 shrink-0 items-center bg-gradient-to-r from-[#22373f] via-[#1f3040] to-[#1b2742] text-white">
      <button aria-label="Start" className={app}><Svg w={16} h={16}><path d="M0 2.300l6.500-0.900v6.200H0zM7.500 1.200L16 0v7.600H7.500zM0 8.600h6.500v6.200L0 13.900zM7.500 8.600H16V16l-8.500-1.200z" fill="#fff" /></Svg></button>
      <button aria-label="Search" className={app}><Svg w={22} h={22}><circle cx="13" cy="9" r="7.500" stroke="#fff" strokeWidth="2" /><path d="M8 15L1 21.500" stroke="#fff" strokeWidth="2.400" /></Svg></button>
      <button aria-label="Task view" className={app}><Svg w={17} h={16}><path d="M0.500 0v3.500h10V0M0.500 16v-3.500h10V16M0.500 5.500h10v5H0.500zM14.500 0v3M14.500 8v8" stroke="#fff" /><path d="M13 4.500h3v3h-3z" fill="#fff" /></Svg></button>
      <div className="ml-[3px] flex h-full gap-px">
        <button aria-label="Edge" className={app}>
          <Svg w={24} h={24}>
            <defs><linearGradient id="ea" x1="0" y1="0" x2="1" y2="0.500"><stop offset="0" stopColor="#2aa9e0" /><stop offset="0.500" stopColor="#35c1c9" /><stop offset="1" stopColor="#62e050" /></linearGradient><linearGradient id="eb" x1="0" y1="0" x2="0" y2="1"><stop offset="0" stopColor="#1b9de2" /><stop offset="1" stopColor="#0f5fb8" /></linearGradient></defs>
            <path d="M0.500 10C2 3.500 7 0 12.500 0C19 0 24 5 24 10.500C24 14.500 21 16.500 18 16.500C15 16.500 14 15.500 14 14.500C14 13.500 15 13 15 11C15 8.500 12.500 6.500 9 6.500C5 6.500 2 8 0.500 10z" fill="url(#ea)" />
            <path d="M0.500 10C2 8 5 6.500 9 6.500C11 6.500 13 7.500 14 8.500C10 8.500 8 11.500 8 14.500C8 19 11 22.500 15 23.500C7 26 0 20 0 12C0 11.300 0.200 10.600 0.500 10z" fill="url(#eb)" />
            <path d="M11.500 9C9 10 8 12 8 14.500C8 19.500 12 23.500 15.500 23.300C18.500 22.500 21 20.500 22.300 18C17 20.500 10.500 17 11.500 9z" fill="#0d4a96" />
          </Svg>
          <span className={`${line} inset-x-1`} />
        </button>
        <button aria-label="File Explorer" className={app}>
          <Svg w={22} h={19}><path d="M0 1h8l2 2.500h12V18H0z" fill="#f5b72b" /><path d="M0 1h8v3H0z" fill="#dc9110" /><path d="M0 5h22v13.500H0z" fill="#ffd566" /><path d="M3.500 18.500V11h15v7.500H14V15H8v3.500z" fill="#3e9be4" /></Svg>
          <span className={`${line} inset-x-1`} />
        </button>
        <button aria-label="Microsoft Store" className={app}>
          <Svg w={24} h={24}><path d="M6.500 6V1.500h11V6" stroke="#38b4ef" strokeWidth="2" /><rect x="1" y="5" width="22" height="18" rx="2" fill="#f5f5f5" /><path d="M7 9h4.500v4.500H7z" fill="#f25022" /><path d="M12.500 9H17v4.500h-4.500z" fill="#7fba00" /><path d="M7 14.500h4.500V19H7z" fill="#00a4ef" /><path d="M12.500 14.500H17V19h-4.500z" fill="#ffb900" /></Svg>
        </button>
        <button aria-label="Mail" className={app}>
          <Svg w={24} h={23}><path d="M0 8L12 0l12 8z" fill="#0c59a4" /><path d="M0 8h24L12 17z" fill="#f2f2f2" /><path d="M0 8l12 8.500L0 22z" fill="#1a8fe0" /><path d="M24 8L12 14 0 22h24z" fill="#32b2f3" /></Svg>
        </button>
        <button aria-label="Tableau" className={`${app} bg-[#50626c]`}>
          <span className="border border-[#bbb] bg-[#f4f4f4] p-px"><TableauMark s={20} /></span>
          <span className={`${line} inset-x-0`} />
        </button>
        <button aria-label="Photos" className={app}>
          <Svg w={22} h={22}><defs><linearGradient id="ph" x1="0" y1="0" x2="1" y2="1"><stop offset="0" stopColor="#1580dc" /><stop offset="0.600" stopColor="#5a58b8" /><stop offset="1" stopColor="#7a4cb0" /></linearGradient></defs><rect width="22" height="22" rx="2" fill="url(#ph)" /><path d="M0 18L9.500 8.500a2 2 0 0 1 2.800 0L22 18.500V20a2 2 0 0 1-2 2H2a2 2 0 0 1-2-2z" fill="#1a9be8" /><path d="M0 19L9 9.500 16 17l-5 5H2a2 2 0 0 1-2-2z" fill="#4fdcf5" /><circle cx="16" cy="5" r="2.200" fill="#fff" /></Svg>
          <span className={`${line} inset-x-1`} />
        </button>
      </div>
      <span className="flex-1" />
      <button className="flex items-center gap-[11px] text-[13px]">
        <Svg w={19} h={24}><path d="M0 2a2 2 0 0 1 2-2h11l5 6v16a2 2 0 0 1-2 2H2a2 2 0 0 1-2-2z" fill="#2ba5ea" /><path d="M0 2a2 2 0 0 1 2-2h11l5 6v3L0 13z" fill="#5cc6fa" /><path d="M3 9h3v7H3zM7.500 13h3v3h-3zM12 10h3v6h-3z" fill="#0b5aa8" /><path d="M3 19h12M3 21.500h12" stroke="#c9eaff" strokeWidth="1.300" /></Svg>
        Earnings upcoming
      </button>
      <div className="ml-6 flex items-center gap-[11px]">
        <button aria-label="Hidden icons"><Svg w={12} h={8}><path d="M0.500 7L6 1.500 11.500 7" stroke="#fff" strokeWidth="1.300" /></Svg></button>
        <button aria-label="Meet now"><Svg w={12} h={18}><path d="M1.500 5.500h7v7h-7zM8.500 8l2.500-1.500v5L8.500 10M2 3c2-2 5-2 7 0M2 15c2 2 5 2 7 0" stroke="#fff" strokeWidth="1.200" /></Svg></button>
        <button aria-label="Battery"><Svg w={15} h={10}><path d="M0.500 0.500h12v8h-12zM13 3h1.500v3H13" stroke="#fff" /><path d="M2 2h3v5H2z" fill="#fff" /></Svg></button>
        <button aria-label="Network"><Svg w={12} h={13}><path d="M0.500 11.500C0.500 5.500 5 1 11.500 1M3.500 12C3.500 7.500 7 4 11.500 4M6.500 12C6.500 9.500 9 7 11.500 7" stroke="#ccd" strokeWidth="1.200" /><circle cx="10.500" cy="11" r="1.500" fill="#fff" /></Svg></button>
        <button aria-label="Volume"><Svg w={17} h={14}><path d="M0.500 4.500h3L7 1v12L3.500 9.500h-3zM9 5c1 1 1 3 0 4M11.500 3c2 2 2 6 0 8M14 1c3 3 3 9 0 12" stroke="#fff" /></Svg></button>
      </div>
      <button className="ml-[10px] w-6 text-center text-[11px] leading-[17px]">ENG<br />IN</button>
      <button className="ml-2 w-[60px] text-center text-[11px] leading-[17px] whitespace-nowrap">5:11 PM<br />10/12/2023</button>
      <button aria-label="Notifications" className="relative mr-3 ml-[13px] flex h-full w-[30px] items-center pl-[1px]">
        <Svg w={17} h={18}><path d="M0 0h16v13H8l-3 4v-4H0z" fill="#fff" /><path d="M3 3.500h10M3 6.500h10M3 9.500h7" stroke="#22304a" /></Svg>
        <span className="absolute top-[18px] left-2 flex h-[17px] w-[17px] items-center justify-center rounded-full border border-[#777] bg-[#2b2f36] text-[11px]">2</span>
      </button>
    </footer>
  );
}

export default function App() {
  return (
    <div className={`flex h-screen w-full flex-col overflow-hidden ${UI}`}>
      <TitleBar />
      <MenuBar />
      <Toolbar />
      <div className="relative flex min-h-0 flex-1">
        <SidePane />
        <Canvas />
        <ShowMe />
      </div>
      <SheetTabs />
      <StatusBar />
      <Taskbar />
    </div>
  );
}
